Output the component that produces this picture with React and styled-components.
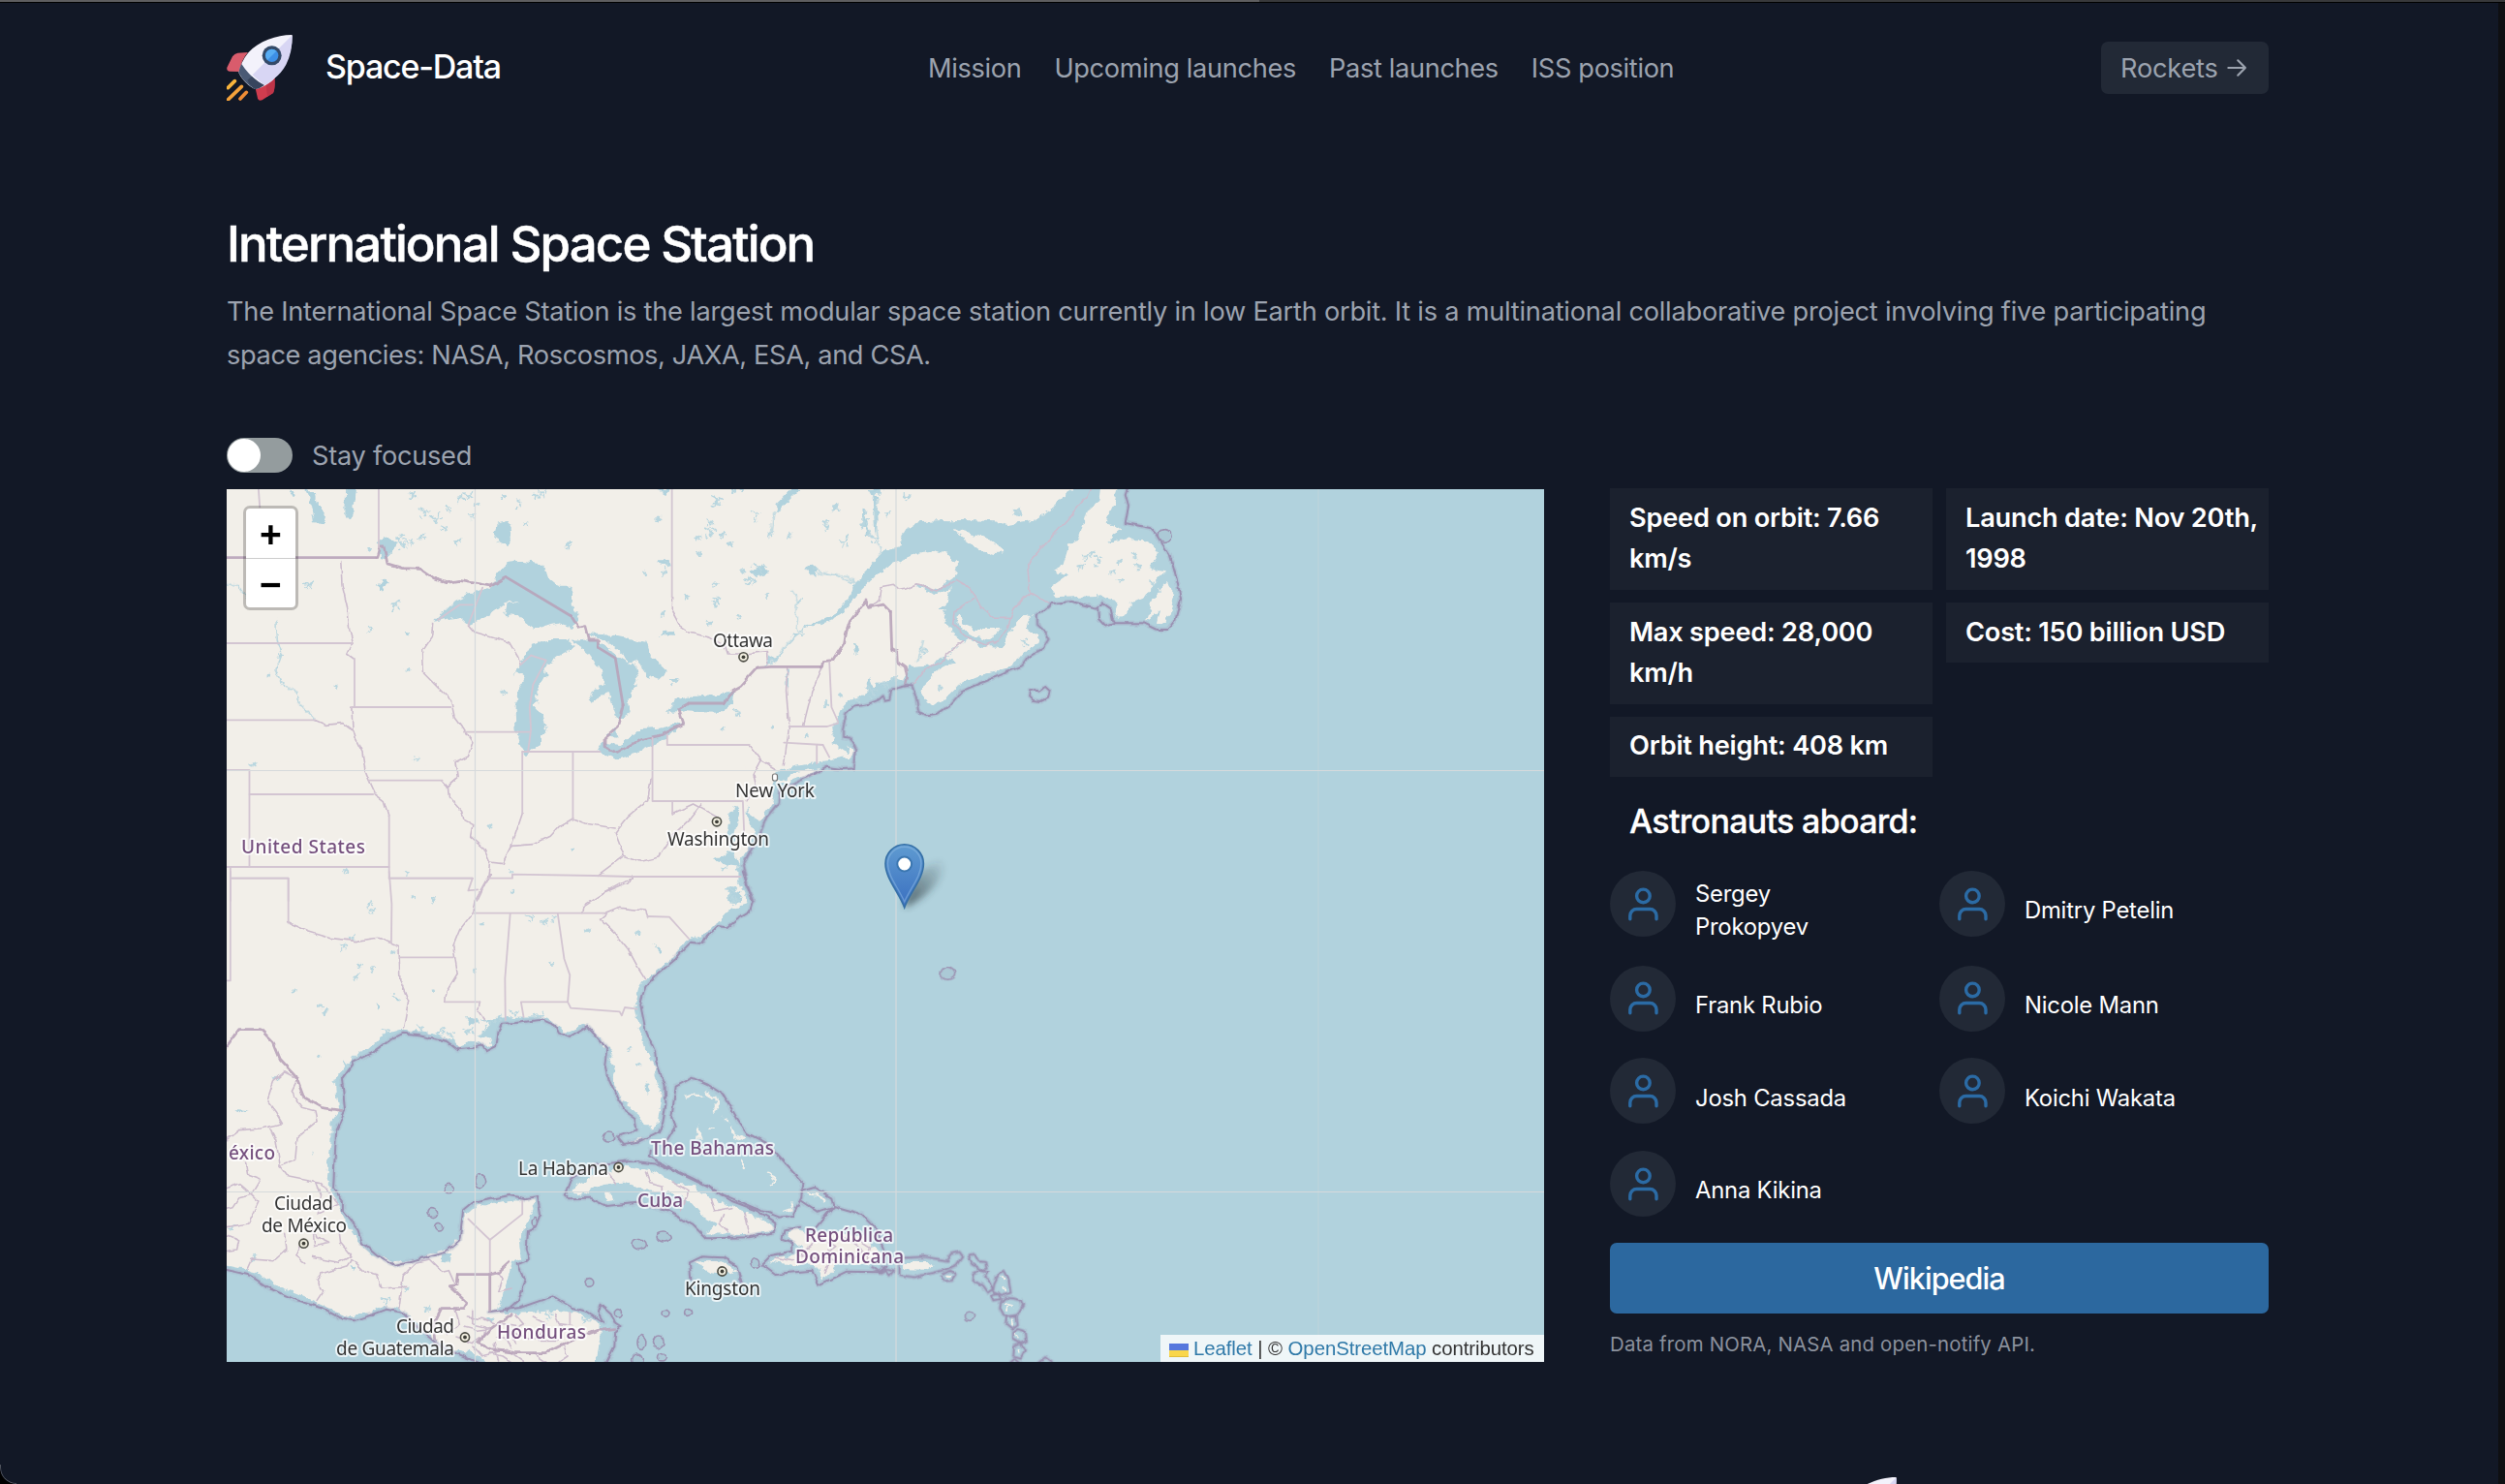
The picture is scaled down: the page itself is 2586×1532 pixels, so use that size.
import React from "react";
import styled, { createGlobalStyle } from "styled-components";

const GlobalStyle = createGlobalStyle`
  *, *::before, *::after { box-sizing: border-box; }
  html, body { margin: 0; padding: 0; background: #000; }
  body {
    font-family: Inter, "Liberation Sans", sans-serif;
    font-size: 27.2px;
    color: #9ca3af;
    overflow: hidden;
  }
  h1, h2, p { margin: 0; }
  a { color: inherit; text-decoration: none; }
`;

/* ---------- window ---------- */
const Window = styled.div`
  width: 2586px;
  height: 1532px;
  overflow: hidden;
  display: grid;
  grid-template-rows: 3px 1fr;
  grid-template-columns: 2579px 7px;
`;
const LoadingStrip = styled.div`
  grid-column: 1 / -1;
  border-bottom: 1px solid #000;
  background: linear-gradient(to right, #5e5e60 1300px, #38393b 1300px);
`;
const Page = styled.div`
  position: relative;
  overflow: hidden;
  background: #121826;
  border-bottom-left-radius: 17px;
  &::after {
    content: "";
    position: absolute;
    left: 0;
    bottom: 0;
    width: 17px;
    height: 20px;
    border-left: 1.5px solid #50545e;
    border-bottom: 1.5px solid #50545e;
    border-bottom-left-radius: 17px;
  }
`;
const Gutter = styled.div`
  background: #0e0f12;
`;
const Container = styled.div`
  width: 2108px;
  margin-left: 234px;
`;

/* ---------- header ---------- */
const Header = styled(Container)`
  display: grid;
  grid-template-columns: 724px 1fr auto;
  align-items: center;
  height: 134px;
`;
const Brand = styled.a`
  display: flex;
  align-items: center;
  gap: 34px;
  color: #fff;
  font-size: 34px;
  font-weight: 500;
  letter-spacing: -1.2px;
  line-height: 44px;
`;
const BrandName = styled.span`
  margin-bottom: 2px;
`;
const RocketSvg = styled.svg`
  width: 68px;
  height: 68px;
  display: block;
`;
const Nav = styled.nav`
  display: flex;
  gap: 34px;
  padding-top: 2px;
  line-height: 40px;
  letter-spacing: -0.34px;
  white-space: nowrap;
`;
const NavLink = styled.a`
  color: #9ca3af;
`;
const GhostButton = styled.button`
  display: flex;
  align-items: center;
  gap: 6px;
  height: 54px;
  width: 173px;
  padding: 0 20px;
  border: 0;
  border-radius: 7px;
  background: #222936;
  color: #9ca3af;
  font: inherit;
  letter-spacing: -0.2px;
`;

/* ---------- intro ---------- */
const Title = styled.h1`
  margin-top: 85px;
  color: #fff;
  font-size: 51px;
  line-height: 60px;
  font-weight: 500;
  letter-spacing: -1.86px;
  -webkit-text-stroke: 0.5px #fff;
`;
const Lead = styled.p`
  margin-top: 18.4px;
  line-height: 44.2px;
  letter-spacing: -0.235px;
  white-space: nowrap;
`;
const LeadEnd = styled.span`
  letter-spacing: -0.37px;
`;
const ToggleRow = styled.label`
  display: flex;
  align-items: center;
  gap: 20px;
  height: 36px;
  margin-top: 63.6px;
  letter-spacing: -0.27px;
`;
const Track = styled.span`
  width: 68px;
  height: 36px;
  padding: 1px;
  border-radius: 18px;
  background: #949c9e;
`;
const Knob = styled.span`
  display: block;
  width: 34px;
  height: 34px;
  border-radius: 50%;
  background: #fff;
`;

/* ---------- content ---------- */
const Content = styled.div`
  display: grid;
  grid-template-columns: 1360px 680px;
  column-gap: 68px;
  height: 901px;
  margin-top: 17px;
`;
const MapFrame = styled.div`
  position: relative;
  width: 1360px;
  height: 901px;
  overflow: hidden;
  background: #b1d2dd;
`;
const MapSvg = styled.svg`
  display: block;
  width: 1360px;
  height: 901px;
`;
const ZoomControl = styled.div`
  position: absolute;
  left: 17px;
  top: 17px;
  width: 57px;
  border: 3px solid rgba(0, 0, 0, 0.22);
  border-radius: 7px;
  background: #fff;
  background-clip: padding-box;
`;
const ZoomButton = styled.div`
  height: 51px;
  padding-top: 3px;
  display: flex;
  align-items: center;
  justify-content: center;
  color: #000;
  font: 700 39px/48px "Liberation Sans", sans-serif;
  & + & {
    border-top: 1.7px solid #ccc;
  }
`;
const Attribution = styled.div`
  position: absolute;
  right: 0;
  bottom: 0;
  height: 28px;
  width: 396px;
  padding: 1px 8px 0 9px;
  display: flex;
  align-items: center;
  background: rgba(255, 255, 255, 0.8);
  color: #333;
  font: 20.4px/27px "Liberation Sans", Arial, sans-serif;
  white-space: pre;
  letter-spacing: -0.08px;
  a { color: #2f79a8; }
`;
const Flag = styled.span`
  width: 20px;
  height: 14px;
  margin: 3px 5px 0 0;
  background: linear-gradient(#5577dd 50%, #f9d64a 50% 92%, #e0bd38 92%);
`;

const Sidebar = styled.aside`
  display: flex;
  flex-direction: column;
  margin-top: -1px;
`;
const Facts = styled.div`
  display: grid;
  grid-template-columns: 1fr 1fr;
  gap: 13px 14px;
  align-items: start;
`;
const Fact = styled.div`
  padding: 9.5px 4px 10.2px 20px;
  background: #1b212e;
  color: #fff;
  font-weight: 600;
  line-height: 42.5px;
  letter-spacing: -0.22px;
`;
const SubTitle = styled.h2`
  margin: 24px 0 0 20px;
  color: #fff;
  font-size: 34px;
  font-weight: 500;
  line-height: 44px;
  letter-spacing: -0.7px;
  -webkit-text-stroke: 0.3px #fff;
`;
const Crew = styled.div`
  display: grid;
  grid-template-columns: 340px 340px;
  grid-template-rows: 97.8px 95.6px 95.6px 68px;
  margin-top: 29px;
`;
const CrewMember = styled.div`
  display: flex;
  align-items: flex-start;
  gap: 20px;
`;
const Avatar = styled.span`
  display: flex;
  align-items: center;
  justify-content: center;
  flex: none;
  width: 68px;
  height: 68px;
  border-radius: 50%;
  background: #222936;
  color: #2b6ba5;
`;
const CrewName = styled.span`
  display: flex;
  align-items: center;
  width: 170px;
  height: 82.6px;
  color: #fff;
  font-size: 23.8px;
  line-height: 34px;
  letter-spacing: -0.2px;
`;
const PrimaryButton = styled.a`
  display: flex;
  align-items: center;
  justify-content: center;
  height: 73.5px;
  margin-top: 27px;
  border-radius: 7px;
  background: #2c689f;
  color: #fff;
  font-size: 30.6px;
  font-weight: 500;
  letter-spacing: -0.95px;
`;
const Note = styled.p`
  margin-top: 17px;
  font-size: 20.4px;
  line-height: 30px;
  letter-spacing: 0.18px;
  color: #8b919d;
`;
const Footer = styled(Container)`
  display: flex;
  justify-content: flex-end;
  padding-right: 384px;
  margin-top: 119px;
`;

/* ---------- icons ---------- */
const Rocket = () => (
  <RocketSvg viewBox="42 48 204 204">
    <path d="M108 102 76 104Q66 106 60 115L43 149Q41 160 52 161L82 162Q85 128 108 102Z" fill="#d95c6c" />
    <path d="M190 178Q193 214 186 228L152 250Q139 255 137 240L131 214Q168 205 190 178Z" fill="#d03c4e" />
    <path d="M190 178Q193 214 186 228L168 239 164 202Z" fill="#be3448" />
    <path d="M243 48C198 48 140 68 110 102 95 120 84 142 79 165 90 190 115 210 130 216 152 213 178 196 190 182 225 150 246 100 245 50Q245 48 243 48Z" fill="#f3f2fb" />
    <path d="M245 49Q246 102 226 140 212 166 190 182 180 195 158 204L122 172Z" fill="#d8d6f4" />
    <path d="M88 138Q81 150 79 165 96 198 130 216 146 213 158 204 115 180 88 138Z" fill="#4a5a75" />
    <path d="M106 188Q116 208 130 216 146 213 158 204 138 194 120 177Z" fill="#37455e" />
    <circle cx="182" cy="112" r="30" fill="#344a68" />
    <circle cx="182" cy="112" r="20" fill="#3d8fe6" />
    <path d="M168 98A20 20 0 0 1 196 98L168 126A20 20 0 0 1 168 98Z" fill="#58adf3" />
    <g strokeWidth="11" strokeLinecap="round">
      <path d="M67 191 46 212" stroke="#f8b43c" />
      <path d="M88 208 45 250" stroke="#f4a23b" />
      <path d="M103 226 84 246" stroke="#ee8c35" />
    </g>
  </RocketSvg>
);
const ArrowIcon = () => (
  <svg width="28" height="28" viewBox="0 0 24 24" fill="none" stroke="currentColor" strokeWidth="2" strokeLinecap="round" strokeLinejoin="round">
    <path d="M4 12h16M13 5l7 7-7 7" />
  </svg>
);
const UserIcon = () => (
  <svg width="40.8" height="40.8" viewBox="0 0 24 24" fill="none" stroke="currentColor" strokeWidth="2" strokeLinecap="round" strokeLinejoin="round">
    <path d="M20 21v-2a4 4 0 00-4-4H8a4 4 0 00-4 4v2" />
    <circle cx="12" cy="7" r="4" />
  </svg>
);

/* ---------- map data, one survey sheet per region ---------- */
const SHEETS = {
  lakes: "translate(220 430) scale(0.44643 0.33333)",
  gulf: "translate(220 900) scale(0.44643 0.33333)",
  newfoundland: "translate(900 490) scale(0.45918 0.33333)",
  antilles: "translate(900 820) scale(0.45918 0.38265)",
  maritime: "translate(640 500) scale(0.33333 0.33333)",
};

const LAND = {
  maritime: [
    "-1250,0 1425,0 1410,15 1370,40 1340,70 1300,100 1270,115 1195,127 1160,115 1100,112 1000,111 920,115 890,135 872,165 870,192 820,203 790,235 765,260 745,290 725,310 715,340 695,365 670,395 640,412 590,433 550,462 595,439 650,420 690,400 715,365 745,330 790,285 850,245 920,212 980,205 1020,218 1047,245 1043,275 1030,292 1000,312 980,330 960,325 940,310 915,310 940,322 970,345 1025,325 1015,355 985,390 1010,390 1000,420 1015,432 1025,460 1070,480 1055,500 1010,530 950,560 895,565 888,590 870,605 850,600 800,615 770,642 740,660 700,678 685,700 672,730 670,750 655,770 665,785 655,805 670,810 700,830 712,820 705,805 720,820 715,845 680,850 650,855 600,862 520,878 490,890 -1250,900",
    "1032,145 1060,146 1140,168 1195,213 1160,216 1110,200 1070,172",
  ],
  lakes: [
    "0,1070 1305,1085 1300,1120 1285,1150 1300,1180 1282,1215 1258,1260 1250,1290 1240,1330 1220,1375 1212,1410 1200,1430 1222,1455 1222,1480 1228,1520 0,1520",
    "1300,1138 1335,1108 1400,1090 1415,1096 1350,1125",
  ],
  gulf: [
    "0,0 1215,0 1215,30 1200,40 1225,60 1238,100 1200,115 1180,140 1170,160 1140,190 1100,205 1080,235 1060,270 1020,312 998,335 983,370 973,420 983,480 998,540 1018,590 1028,650 1038,700 1030,760 1025,790 995,790 985,760 965,735 945,700 932,670 920,640 930,610 915,580 920,550 900,530 885,500 862,470 840,490 815,502 800,480 770,450 700,452 625,458 635,485 610,505 645,518 640,540 600,525 570,540 540,512 490,498 440,487 400,500 370,540 330,565 300,605 282,650 285,700 290,740 272,780 272,850 262,940 275,990 292,1040 308,1090 338,1150 362,1180 400,1195 415,1213 470,1203 520,1178 552,1165 572,1120 582,1060 600,1040 680,1018 740,1012 745,1045 722,1090 708,1150 712,1200 690,1215 680,1270 668,1320 655,1360 700,1368 800,1358 850,1372 895,1402 895,1440 885,1530 640,1530 600,1490 545,1475 510,1450 470,1400 430,1352 390,1342 360,1368 320,1378 270,1355 200,1312 150,1285 100,1240 0,1210",
    "845,1002 828,995 850,962 900,930 960,912 1010,925 1050,950 1070,965 1110,970 1150,1010 1200,1038 1250,1065 1300,1098 1280,1115 1230,1122 1140,1120 1165,1088 1130,1065 1100,1020 1050,988 1000,985 950,962 900,965 880,978 860,998",
    "905,995 925,998 928,1018 910,1020",
    "1108,1208 1170,1205 1212,1232 1200,1246 1150,1240",
    "1278,1202 1330,1192 1365,1172 1328,1130 1340,1108 1380,1120 1450,1115 1500,1130 1545,1180 1530,1212 1440,1218 1410,1262 1395,1218 1340,1215",
    "1115,830 1122,788 1135,830",
  ],
  newfoundland: [
    "515,30 553,30 545,90 525,150 562,168 545,185 530,212 560,200 610,198 640,225 645,245 622,290 640,302 665,290 640,330 620,360 610,380 575,400 590,400 560,440 543,435 552,390 500,375 415,382 398,350 440,310 405,298 430,280 445,210 465,200 485,110 510,85",
    "662,335 682,370 675,420 660,462 640,455 647,420 618,447 635,380",
    "110,680 120,640 150,600 190,580 165,565 190,540 215,508 250,530 300,535 310,490 345,428 357,440 345,480 378,500 375,525 345,545 330,570 300,600 250,620 215,640 190,655 165,690 135,720 120,700",
    "188,440 200,430 205,460 240,480 285,480 265,515 230,500 200,475",
  ],
  antilles: [
    "72,1262 130,1262 136,1272 120,1285 72,1284",
  ],
};

const WATER = {
  lakes: [
    "510,638 560,570 600,545 640,530 660,480 690,445 720,450 765,458 775,500 800,530 830,530 828,580 845,620 835,655 800,640 745,657 720,640 705,615 675,612 680,580 705,570 685,572 640,615 590,645 570,620",
    "695,815 708,770 735,708 780,690 820,690 835,715 800,740 765,780 770,800 750,850 745,900 765,930 770,970 755,1015 725,1048 710,1010 700,970 698,900 705,850 720,800 705,790",
    "830,695 880,690 930,735 975,770 982,820 960,870 965,915 935,938 925,900 915,855 895,865 880,890 868,880 880,850 900,830 895,780 870,735",
    "865,672 930,678 1000,698 1010,740 1050,790 1030,815 1000,800 980,755 965,760 920,705",
    "888,1035 900,1008 940,1018 980,970 1030,965 1090,945 1060,985 1020,1018 975,1045 930,1064",
    "1046,918 1070,880 1120,865 1180,860 1205,848 1203,890 1170,915 1090,910",
    "910,988 930,965 933,992",
    "213,225 235,240 240,275 260,310 255,330 235,328 230,280",
    "305,225 332,225 325,290 315,318 303,300",
    "655,330 680,320 692,350 680,402 650,380",
    "385,390 400,375 425,395 415,420 400,440 385,435",
    "1195,1225 1215,1205 1212,1260 1202,1330 1220,1395 1190,1390 1160,1370 1195,1350 1190,1270",
    "1235,1210 1262,1260 1252,1290 1238,1245",
    "378,525 395,505 410,515 390,535",
    "1375,462 1393,465 1390,488 1378,480",
    "176,225 186,225 190,245 182,245",
    "1040,670 1065,665 1062,680 1035,678",
    "1325,780 1332,780 1330,832 1326,830",
    "443,665 455,668 450,685",
  ],
  gulf: [
    "1190,40 1210,45 1205,65 1222,70 1215,95 1190,90",
    "998,665 1005,655 1013,672 1003,690",
    "585,450 608,455 615,470 590,468",
    "412,380 430,385 432,400",
    "375,405 388,420 382,430",
    "1015,225 1040,245 1030,248",
    "50,738 85,742 60,748",
    "225,860 230,862 228,880",
    "632,1385 650,1378 645,1395",
    "525,1190 550,1186 545,1208 530,1205",
    "316,1215 330,1225 325,1240",
  ],
  maritime: [
    "480,90 485,60 515,30 530,15 555,15 520,50 500,75",
    "750,80 760,75 762,110 775,155 768,160 752,125",
    "785,40 795,42 800,110 790,155",
    "575,255 600,250 610,268 590,278",
    "720,495 735,500 738,520 728,525",
    "400,270 440,248 460,275 430,285",
    "120,235 145,235 165,250 130,252",
    "450,565 460,540 495,530 480,545",
    "765,15 815,15 800,35 775,32",
    "105,15 150,15 145,28",
    "760,625 775,600 785,625 800,610 810,640 770,650",
    "155,600 180,605 172,622",
    "530,468 570,462 545,475",
  ],
};

const NATIONAL = {
  lakes: [
    "31,437 378,437",
    "677,497 828,618", "890,715 930,748 948,895", "1100,888 1180,888", "1258,778 1290,775 1408,775",
  ],
  gulf: ["565,1247 640,1247 640,1360"],
  maritime: ["838,395 842,512"],
};
const NATIONAL_ROUGH = {
  lakes: [
    "378,437 385,405 395,405 403,455 440,470 480,472 510,500 540,515 570,508 600,515 640,525 677,497",
    "828,618 845,655 862,650 870,690 890,690 890,715",
    "948,895 935,960 905,995 905,1025 935,1042 990,1000 1040,985 1088,950 1077,905 1100,888",
    "1180,888 1200,850 1220,835 1258,778",
  ],
  gulf: [
    "31,540 60,488 110,488 140,530 155,580 190,630 210,700 250,730 300,740",
    "565,1247 562,1280 545,1283 588,1335 580,1352 528,1352 510,1400 515,1450",
    "640,1247 660,1240 685,1210",
    "690,1370 640,1420 610,1460 650,1480 700,1490 770,1490 800,1470 850,1440 890,1420 930,1415",
  ],
  maritime: [
    "625,565 628,548 660,545 695,490 700,460 712,425 762,360 770,382 815,372 838,395",
    "842,512 860,518 862,550 883,565 890,600 885,625",
  ],
};
const STATE = {
  lakes: [
    "105,225 108,280", "383,225 383,405", "1061,225 1061,560",
    "31,702 323,702", "320,900 550,900", "31,940 235,940", "360,1127 530,1127",
    "580,977 732,977", "715,1038 895,1038", "715,1038 715,1230", "832,1038 832,1250",
    "1050,985 1050,1017 1240,1017", "1016,995 1016,1191 1225,1191 1228,1290",
    "31,1095 84,1095 84,1393", "84,1170 370,1170", "31,1395 407,1395", "40,1395 40,1500",
    "40,1430 174,1430 174,1500", "407,1430 600,1430 590,1468 612,1465",
    "635,1430 692,1430 692,1418 880,1422 967,1425 1220,1425", "327,750 327,900", "407,1235 407,1430",
    "1332,960 1420,960 1445,950", "1320,1010 1410,1017", "1425,760 1430,900 1445,945", "1396,1017 1396,1075", "1410,1017 1425,1055",
    "1062,1191 1062,1230", "600,583 570,583 520,630", "623,530 590,645", "735,740 770,755 740,830 732,900 735,970 728,1040", "735,740 710,770",
  ],
  gulf: [
    "40,0 40,337 31,337", "40,20 174,20 174,158", "407,20 600,20", "407,0 413,100 412,220", "432,265 555,265",
    "600,128 910,128", "537,403 617,403", "687,130 675,330 676,460", "797,130 812,270 825,320 820,403 712,403 718,450",
    "820,403 827,422 940,433 945,445 952,420 980,425", "1005,138 1055,140 1100,207",
    "590,1075 640,1140 640,1247", "715,1020 715,1060 640,1140", "825,1365 825,1400",
  ],
};
const STATE_ROUGH = {
  lakes: [
    "1061,560 1060,600 1080,650 1100,668 1150,685 1185,715 1190,735 1230,735 1280,728 1283,765",
    "295,445 298,520 312,600 315,660 323,700 310,735 325,750",
    "235,940 260,955 300,950 325,975 330,1000 345,1040 352,1100 360,1127 375,1170 395,1190 405,1235",
    "530,1127 543,1145 560,1125", "320,900 323,975",
    "510,638 508,680 485,725 487,795 520,840 550,880 558,930 580,970 600,1010 590,1050 560,1070 565,1120 543,1145 545,1175 575,1220 580,1250 600,1265 595,1300 625,1335 640,1380 635,1430 610,1500",
    "590,645 605,668 685,700 705,745 710,770",
    "715,1230 690,1330 740,1325 780,1300 800,1270 832,1245 860,1260 930,1275",
    "690,1330 670,1385 640,1380",
    "1240,1017 1268,1065 1305,1095", "1268,1065 1250,1110 1255,1140 1235,1190",
    "1013,1120 1005,1190 960,1240 930,1290 950,1360 990,1378 1030,1365 1060,1300 1100,1250 1130,1200",
    "1062,1230 1110,1200 1165,1240", "950,1360 890,1420", "967,1425 960,1445 900,1480",
    "1328,778 1325,850 1332,960 1320,1080", "1408,780 1385,850 1365,957",
  ],
  gulf: [
    "174,158 220,185 270,205 330,215 380,205 412,220 430,230 432,335 452,400 440,485",
    "640,5 605,90 600,128 570,180 555,230 565,315 540,370 537,403", "617,403 612,430 628,460",
    "967,20 900,70 855,110 853,128", "910,128 895,145 930,190 960,240 980,290 1000,332", "910,128 940,112 1000,120 1005,138",
    "165,620 140,650 125,710 145,745 160,780 110,795 60,800 31,830", "165,620 195,640 180,680 205,730 235,740 240,770 195,820 190,890 155,910 145,830 130,790",
    "75,900 80,940 110,955 90,1000 105,1020 80,1090 31,1100", "155,910 175,945 250,965 290,1030 240,1060 250,1000 240,965",
    "31,980 60,965 90,1000 60,1010 45,1040 31,1045", "31,1125 60,1140 55,1170 31,1175", "80,1230 90,1200 140,1205 170,1170 165,1120",
    "210,1210 190,1190 200,1160", "230,1100 235,1160 270,1150 240,1130 230,1100", "230,1195 290,1210 320,1190 295,1150 290,1100",
    "240,1330 255,1300 240,1260 250,1245 310,1220 320,1200 350,1240 380,1250 390,1290 450,1285", "430,1350 440,1250 470,1210 500,1200 530,1240",
    "530,1240 545,1235 560,1280", "600,1360 600,1400 630,1410 625,1450", "560,1355 570,1400 540,1430", "650,1240 670,1260 660,1300 690,1290",
    "700,1370 720,1400 690,1420 700,1460", "740,1380 770,1400 750,1450 800,1450", "600,1470 620,1500 680,1480 720,1518", "650,1460 660,1515", "740,1490 770,1518",
    "700,1430 730,1450 760,1440", "560,1440 600,1460 620,1440",
    "590,1380 625,1385 650,1400", "580,1410 610,1420 640,1415", "655,1440 680,1445 690,1475", "670,1400 700,1405", "640,1490 670,1500 690,1518",
    "790,1370 800,1400 830,1405", "810,1470 820,1500 800,1518",
    "910,930 930,965", "1000,930 1010,965 1040,975 1040,1000", "1060,960 1100,990 1080,1050", "1150,1010 1160,1050 1200,1040", "1180,1060 1170,1090 1190,1115", "1230,1060 1240,1120",
    "1370,1120 1390,1150 1360,1180 1400,1200", "1400,1130 1440,1160 1410,1190 1450,1210 1480,1180", "1460,1130 1500,1170 1480,1205",
    "1300,1195 1340,1205", "1350,1185 1380,1190 1390,1215", "1420,1170 1430,1200 1415,1240", "1490,1140 1520,1165 1510,1200",
  ],
  maritime: [
    "770,380 805,360 810,320 850,313 865,325 890,320 915,308 950,315",
    "905,625 950,570 1005,545 1010,525 1060,485",
  ],
  newfoundland: [
    "493,45 485,70 470,85 440,140 350,275 355,365 400,400",
    "355,365 320,415 312,445 275,445 245,410 232,375 215,345 190,325 145,360 105,340",
    "232,378 185,425 182,465 210,500 255,527 285,515 305,475 312,445",
  ],
};
const SEA = {
  maritime: [
    "600,898 640,875 690,882 725,880 732,820 715,788 690,785 690,760 700,710 720,690 770,680 800,668 815,655 820,668 835,665 840,635 885,625 905,625 918,665 925,705 950,715 985,710 1020,685 1060,640 1110,618 1180,590 1245,562 1265,535 1315,505 1330,480 1320,460 1293,435 1292,405 1335,370",
  ],
  lakes: ["1398,1100 1340,1140 1310,1155 1308,1195 1280,1240 1265,1290 1245,1340 1225,1390 1235,1450 1250,1500"],
  newfoundland: [
    "400,400 450,393 505,413 520,400 535,415 540,450 545,460 610,460 640,480 665,480 682,450 695,385 685,320 670,250 640,185 625,165 570,150 577,95 570,60 577,30",
    "510,415 512,450 525,470 543,462",
    "355,670 370,665 378,668 390,657 400,670 397,690 380,702 362,698 353,685 355,670",
  ],
  gulf: [
    "1225,0 1248,90 1240,125 1215,145 1190,172 1165,168 1140,200 1130,222 1105,218 1085,245 1070,270 1025,320 1000,355 988,410 1000,490 1022,560 1025,590 1045,660 1047,720 1040,780 1030,805 985,835 950,843 935,820 955,810 980,800 975,765 955,745 935,700 915,640 908,600 912,550 890,515 865,480 825,513 800,500 790,475 760,458 700,468 668,470 660,495 655,540 632,556 622,535 600,545 565,550 540,525 480,505 440,500 410,520 370,560 325,590 298,640 305,740 285,800 280,920 278,980 300,1020 300,1050 335,1110 345,1150 380,1190 420,1218 480,1198 540,1175 570,1140 578,1050 600,1025 685,1002 720,1012 750,1005 757,1060 745,1100 728,1110 725,1170 732,1200 705,1215 722,1270 705,1330 680,1360",
    "640,1362 710,1350 785,1315 830,1350 865,1362 905,1395 890,1360 895,1340 920,1370 930,1400 942,1410 930,1425 928,1470 910,1518",
    "20,1230 85,1250 130,1290 190,1325 250,1350 290,1380 325,1390 370,1370 400,1355 440,1365 480,1420 520,1465 570,1495 620,1525",
    "1050,830 1068,790 1060,760 1070,665 1108,638 1145,660 1180,690 1210,760 1235,810 1280,840 1320,900 1365,965 1360,1010 1340,1065 1310,1070 1250,1040 1180,1000 1110,950 1030,900 1010,880 1012,860",
    "815,1000 830,950 880,910 960,895 1030,905 1080,935 1150,980 1200,1020 1260,1050 1300,1085 1300,1115 1240,1132 1140,1135 1110,1095 1050,1050 980,1025 910,1035 870,1010 820,1012 815,1000",
    "1360,990 1390,978 1430,1010 1435,1040 1400,1055 1360,1020",
    "1395,1100 1435,1035 1500,1060 1530,1100 1550,1170",
    "1105,1262 1102,1210 1130,1192 1180,1195 1210,1220 1222,1270",
    "1360,1100 1320,1108 1316,1140 1340,1150 1340,1175 1290,1188 1270,1215 1300,1245 1385,1235 1400,1280 1465,1238 1540,1240 1560,1220",
  ],
  antilles: [
    "75,1250 120,1248 170,1258 180,1240 195,1235 203,1248 190,1270 160,1285 140,1290 95,1303 60,1297 60,1270",
    "160,1295 175,1285 188,1298 180,1312 163,1313 157,1303",
    "0,1275 20,1290 35,1280 50,1285 40,1298 25,1275",
    "222,1245 232,1243 240,1260 255,1262 258,1280 245,1285 225,1270 218,1255 222,1245",
    "230,1295 245,1285 262,1290 255,1305 265,1315 272,1335 260,1345 248,1325 228,1312 230,1295",
    "275,1320 285,1295 298,1288 308,1310 312,1345 295,1352 272,1340 275,1320",
    "270,1350 285,1345 290,1362 275,1365 270,1350",
    "290,1370 300,1358 318,1360 335,1365 340,1378 330,1398 325,1410 298,1408 288,1385 290,1370",
    "305,1410 325,1405 328,1430 315,1442 303,1430 305,1410",
    "318,1450 330,1440 343,1445 346,1475 335,1482 318,1470 318,1450",
    "320,1490 335,1482 344,1500 335,1520 318,1515 320,1490",
    "310,1535 322,1522 335,1535", "378,1530 390,1519 402,1530",
  ],
};
/* small reef and islet rings: cx, cy, rx, ry */
const RINGS = {
  gulf: [
    [915, 822, 14, 15], [545, 981, 11, 14], [619, 958, 12, 20], [508, 1055, 11, 15], [521, 1100, 9, 13],
    [986, 1154, 16, 16], [1043, 1131, 17, 15], [1255, 1210, 10, 15], [869, 1272, 11, 13], [936, 1365, 8, 13],
    [1046, 1369, 9, 12], [1099, 1365, 9, 13], [991, 1458, 10, 22], [1030, 1455, 12, 18], [981, 1512, 12, 18], [1037, 1504, 10, 14],
    [742, 1085, 7, 12],
  ],
  newfoundland: [[659, 189, 14, 19]],
  antilles: [[171, 483, 16, 17], [220, 1408, 10, 12]],
};
/* faint pond and river flecks: x, y, size */
const FLECKS = {
  lakes: [
    [460, 240, 9], [490, 300, 12], [515, 310, 14], [545, 285, 7], [570, 250, 12], [535, 345, 8], [480, 370, 7], [600, 310, 7],
    [565, 390, 6], [710, 270, 8], [745, 245, 9], [762, 240, 9], [720, 330, 7], [820, 400, 5], [1028, 315, 6], [1165, 265, 13],
    [1120, 375, 6], [1050, 460, 10], [1440, 280, 9], [1265, 475, 16], [1225, 475, 5], [1095, 560, 7], [1160, 575, 8],
    [1150, 640, 5], [418, 585, 12], [362, 660, 5], [450, 783, 4], [675, 858, 7], [220, 520, 9], [1068, 823, 9], [1215, 922, 8],
    [470, 1062, 5], [92, 1077, 6], [155, 740, 5], [130, 800, 5], [460, 390, 6], [430, 375, 12], [440, 400, 9], [610, 270, 5],
    [360, 415, 4], [1330, 370, 6], [1420, 345, 5], [1505, 330, 12], [1530, 380, 9], [1560, 300, 8], [1540, 230, 11], [1355, 570, 5],
    [285, 840, 4], [1290, 960, 4], [830, 1340, 3], [640, 1270, 4], [690, 1410, 6], [1180, 1395, 8], [1200, 1470, 11], [305, 1410, 5], [450, 1415, 5],
    [1415, 890, 6], [675, 250, 5], [590, 240, 7], [1240, 510, 6], [1040, 485, 5],
  ],
  gulf: [
    [360, 100, 8], [370, 120, 6], [462, 75, 6], [510, 88, 5], [690, 60, 5], [735, 145, 9], [765, 155, 8], [790, 145, 6],
    [620, 160, 5], [868, 180, 5], [980, 192, 5], [300, 235, 6], [320, 200, 7], [340, 290, 6], [330, 325, 6], [370, 305, 5],
    [415, 245, 5], [185, 367, 3], [245, 415, 4], [260, 435, 4], [512, 370, 4], [605, 305, 4], [785, 280, 4], [480, 488, 7],
    [520, 495, 12], [550, 510, 9], [590, 490, 10], [635, 470, 12], [655, 455, 12], [695, 440, 9], [750, 445, 13], [400, 497, 9],
    [325, 572, 8], [310, 600, 7], [280, 650, 5], [245, 572, 3], [145, 635, 4], [965, 550, 5], [985, 600, 4], [445, 1290, 5],
    [490, 1350, 8], [95, 1195, 5], [45, 1100, 6], [400, 1335, 9], [860, 1385, 9], [780, 1375, 10], [1190, 50, 7], [1205, 90, 8],
  ],
  maritime: [
    [300, 55, 13], [280, 150, 14], [318, 155, 10], [420, 98, 9], [665, 70, 12], [640, 120, 6], [690, 175, 18], [300, 362, 12],
    [130, 400, 6], [370, 412, 8], [465, 152, 7], [205, 345, 6], [75, 272, 5], [120, 105, 5], [1230, 85, 8], [890, 40, 7],
    [350, 20, 8], [385, 15, 6], [245, 210, 5], [365, 710, 9], [680, 658, 5], [940, 520, 8], [318, 755, 8], [635, 680, 5], [578, 775, 4],
    [280, 120, 8], [340, 185, 7], [415, 305, 7], [455, 345, 5], [295, 312, 5], [850, 600, 9], [780, 645, 12], [820, 620, 10], [740, 670, 8],
  ],
  newfoundland: [
    [480, 250, 11], [510, 265, 10], [470, 285, 8], [560, 330, 6], [540, 300, 6], [600, 285, 6], [555, 270, 5], [590, 250, 5],
    [325, 110, 8], [345, 520, 9], [10, 60, 5], [155, 662, 4], [495, 240, 6], [630, 340, 7],
  ],
};
const REEFS = {
  gulf: [
    "1090,695 1110,688 1130,692", "1140,685 1160,700 1165,730 1158,740", "1180,765 1190,772", "1200,790 1207,815 1230,830",
    "1285,935 1302,945 1292,970", "1225,890 1230,915", "1320,1052 1335,1045 1342,1030", "1375,998 1400,1000 1412,1018", "1150,796 1158,798",
    "960,835 1000,825",
  ],
  antilles: [
    "293,1300 297,1312", "295,1330 298,1338", "300,1375 318,1380", "308,1385 305,1395", "313,1415 316,1425", "325,1455 330,1468", "330,1495 332,1505", "168,1298 178,1300",
  ],
};
const CITIES = [
  ["Ottawa", 736, 667.5, 62], ["New York", 759, 823, 82], ["Washington", 689, 873, 105],
  ["Ciudad", 283, 1249, 61], ["de México", 270, 1272, 88], ["La Habana", 535, 1212.7, 93],
  ["Kingston", 707, 1337, 78], ["Ciudad", 409, 1376, 60], ["de Guatemala", 347, 1398.7, 122],
];
const COUNTRIES = [
  ["United States", 249, 880.7, 128], ["éxico", 236, 1197.3, 48], ["The Bahamas", 672, 1191.7, 127], ["Cuba", 658, 1246, 47],
  ["República", 831, 1281.5, 91], ["Dominicana", 821, 1304, 112], ["Honduras", 513, 1382, 92],
];
const CAPITALS = [[767.5, 678.3], [740, 848.3], [313.5, 1283.7], [638.5, 1205], [745.5, 1312.5], [480, 1380.5]];

const Shapes = ({ data, fill }) =>
  Object.entries(data).map(([sheet, list]) => (
    <g key={sheet} transform={SHEETS[sheet]} fill={fill}>
      {list.map((pts) => <polygon key={pts} points={pts} />)}
    </g>
  ));
const Lines = ({ data, stroke, width, opacity = 1 }) =>
  Object.entries(data).map(([sheet, list]) => (
    <g key={sheet} transform={SHEETS[sheet]} fill="none" stroke={stroke} strokeWidth={width} opacity={opacity} strokeLinejoin="round" strokeLinecap="round">
      {list.map((pts) => <polyline key={pts} points={pts} vectorEffect="non-scaling-stroke" />)}
    </g>
  ));
const Rings = () =>
  Object.entries(RINGS).map(([sheet, list]) => (
    <g key={sheet} transform={SHEETS[sheet]} fill="#abc9d6" stroke="#9d92b2" strokeWidth="1.6">
      {list.map(([x, y, rx, ry]) => <ellipse key={`${x}-${y}`} cx={x} cy={y} rx={rx} ry={ry} vectorEffect="non-scaling-stroke" />)}
    </g>
  ));
const Flecks = () =>
  Object.entries(FLECKS).map(([sheet, list]) => (
    <g key={sheet} transform={SHEETS[sheet]} fill="none" stroke="#b9d6df" strokeWidth="1.8" strokeLinecap="round">
      {list.map(([x, y, s], i) => (
        <path
          key={`${x}-${y}`}
          vectorEffect="non-scaling-stroke"
          d={i % 2
            ? `M${x - s} ${y - s}l${s} ${s * 0.6}l${s * 0.3} ${s}M${x + s * 0.4} ${y - s}l${s * 0.5} ${s * 0.4}M${x - s * 0.7} ${y + s}l${s * 0.2} ${s * 0.3}`
            : `M${x + s} ${y - s * 0.8}l${-s * 0.7} ${s * 0.7}l${-s} ${s * 0.2}M${x} ${y + s * 0.3}l${-s * 0.3} ${s}M${x + s * 0.7} ${y + s * 0.4}l${s * 0.3} ${s * 0.3}`}
        />
      ))}
    </g>
  ));
const Labels = ({ items, fill, weight }) => (
  <g fontFamily='"Noto Sans", "Open Sans", sans-serif' fontSize="19" fontWeight={weight} fill={fill} stroke="#fff" strokeOpacity="0.75" strokeWidth="4" strokeLinejoin="round" paintOrder="stroke">
    {items.map(([t, x, y, w]) => <text key={`${t}-${y}`} x={x} y={y} textLength={w}>{t}</text>)}
  </g>
);

const RIVERS = {
  lakes: [
    "148,630 148,690 158,740 145,790 165,840 190,850 200,890 235,935", "31,515 60,520 75,560", "1385,470 1430,490 1485,515",
    "1350,680 1320,720 1290,770",
  ],
  maritime: [
    "555,465 510,500 490,535 455,560", "610,275 700,285 728,300", "800,50 790,100 805,215", "480,90 470,150", "760,80 755,120 780,165",
    "520,570 515,620", "940,480 935,510 920,550", "530,330 550,360 545,440 555,460",
  ],
};

const WorldMap = () => (
  <MapSvg viewBox="234 505 1360 901">
    <defs>
      <filter id="coast" filterUnits="userSpaceOnUse" x="200" y="480" width="1420" height="950">
        <feTurbulence type="fractalNoise" baseFrequency="0.11" numOctaves="3" seed="4" result="n" />
        <feDisplacementMap in="SourceGraphic" in2="n" scale="9" xChannelSelector="R" yChannelSelector="G" />
      </filter>
      <filter id="wiggle" filterUnits="userSpaceOnUse" x="200" y="480" width="1420" height="950">
        <feTurbulence type="fractalNoise" baseFrequency="0.09" numOctaves="2" seed="9" result="n" />
        <feDisplacementMap in="SourceGraphic" in2="n" scale="5" xChannelSelector="R" yChannelSelector="G" />
      </filter>
      <filter id="soft" x="-50%" y="-50%" width="200%" height="200%"><feGaussianBlur stdDeviation="3.5" /></filter>
      <linearGradient id="pin" x1="0" y1="0" x2="0" y2="1">
        <stop offset="0" stopColor="#5f9bd1" />
        <stop offset="1" stopColor="#3a6fc0" />
      </linearGradient>
      <linearGradient id="shade" x1="0" y1="1" x2="0.8" y2="0">
        <stop offset="0" stopColor="#2c3a40" stopOpacity="0.75" />
        <stop offset="1" stopColor="#2c3a40" stopOpacity="0.1" />
      </linearGradient>
    </defs>
    <rect x="234" y="505" width="1360" height="901" fill="#b1d2dd" />
    <g filter="url(#coast)">
      <Shapes data={LAND} fill="#f2efe9" />
      <Shapes data={WATER} fill="#b1d2dd" />
      <Flecks />
      <Lines data={REEFS} stroke="#f2efe9" width="2.2" />
      <Lines data={RIVERS} stroke="#b9d6df" width="1.4" />
    </g>
    <g filter="url(#wiggle)">
      <Lines data={STATE_ROUGH} stroke="#ccbccd" width="1.6" />
      <Lines data={NATIONAL_ROUGH} stroke="#b8a3ba" width="2.8" opacity={0.9} />
      <Lines data={SEA} stroke="#a9b4cb" width="5" opacity={0.45} />
      <Lines data={SEA} stroke="#9a90b1" width="2" />
      <Rings />
    </g>
    <Lines data={STATE} stroke="#d3c5d2" width="1.8" />
    <Lines data={NATIONAL} stroke="#b8a3ba" width="2.8" opacity={0.9} />
    <g stroke="#d6dadc" strokeWidth="1.2">
      <path d="M490.5 505V1406M925 505V1406" />
      <path d="M1361 505V1406" opacity="0.35" />
      <path d="M234 795.5H1594M234 1230.5H1594" />
    </g>
    <Labels items={CITIES} fill="#333" weight={400} />
    <Labels items={COUNTRIES} fill="#75507e" weight={500} />
    {CAPITALS.map(([x, y]) => (
      <g key={x}>
        <circle cx={x} cy={y} r="4.6" fill="#f2efe0" stroke="#4c4c44" strokeWidth="1.6" />
        <circle cx={x} cy={y} r="1.9" fill="#3d3d36" />
      </g>
    ))}
    <rect x="797.5" y="799" width="5" height="7" rx="2" fill="#fff" stroke="#777" strokeWidth="1.2" />
    <path d="M934 937C938 912 950 892 972 890 978 905 958 926 934 937Z" fill="url(#shade)" filter="url(#soft)" />
    <path d="M933.7 937C928 921 914 907 914 891.500A19.700 19.700 0 0 1 953.400 891.500C953.400 907 939.500 921 933.700 937Z" fill="url(#pin)" stroke="#356fa6" strokeWidth="1.6" />
    <path d="M933.7 931C928 917 916.500 905 916.500 891.500A17.200 17.200 0 0 1 950.900 891.500C950.900 905 939.500 917 933.700 931Z" fill="none" stroke="#8ab8e2" strokeOpacity="0.55" strokeWidth="1.4" />
    <circle cx="933.7" cy="892" r="7.4" fill="#fff" stroke="#3a76b0" strokeWidth="2" />
  </MapSvg>
);

/* ---------- data ---------- */
const NAV = ["Mission", "Upcoming launches", "Past launches", "ISS position"];
const FACTS = ["Speed on orbit: 7.66 km/s", "Launch date: Nov 20th, 1998", "Max speed: 28,000 km/h", "Cost: 150 billion USD", "Orbit height: 408 km"];
const CREW = ["Sergey Prokopyev", "Dmitry Petelin", "Frank Rubio", "Nicole Mann", "Josh Cassada", "Koichi Wakata", "Anna Kikina"];

export default function App() {
  return (
    <>
      <GlobalStyle />
      <Window>
        <LoadingStrip />
        <Page>
          <Header as="header">
            <Brand href="#"><Rocket /><BrandName>Space-Data</BrandName></Brand>
            <Nav>{NAV.map((n) => <NavLink key={n} href="#">{n}</NavLink>)}</Nav>
            <GhostButton>Rockets <ArrowIcon /></GhostButton>
          </Header>
          <Container as="main">
            <Title>International Space Station</Title>
            <Lead>
              The International Space Station is the largest modular space station currently in low Earth orbit. It is a multinational collaborative project involving five participating
              <br />
              <LeadEnd>space agencies: NASA, Roscosmos, JAXA, ESA, and CSA.</LeadEnd>
            </Lead>
            <ToggleRow><Track><Knob /></Track>Stay focused</ToggleRow>
            <Content>
              <MapFrame>
                <WorldMap />
                <ZoomControl>
                  <ZoomButton>+</ZoomButton>
                  <ZoomButton>−</ZoomButton>
                </ZoomControl>
                <Attribution>
                  <Flag /><a href="#">Leaflet</a> | © <a href="#">OpenStreetMap</a> contributors
                </Attribution>
              </MapFrame>
              <Sidebar>
                <Facts>{FACTS.map((f) => <Fact key={f}>{f}</Fact>)}</Facts>
                <SubTitle>Astronauts aboard:</SubTitle>
                <Crew>
                  {CREW.map((name) => (
                    <CrewMember key={name}><Avatar><UserIcon /></Avatar><CrewName>{name}</CrewName></CrewMember>
                  ))}
                </Crew>
                <PrimaryButton href="#">Wikipedia</PrimaryButton>
                <Note>Data from NORA, NASA and open-notify API.</Note>
              </Sidebar>
            </Content>
          </Container>
          <Footer as="footer"><Rocket /></Footer>
        </Page>
        <Gutter />
      </Window>
    </>
  );
}
